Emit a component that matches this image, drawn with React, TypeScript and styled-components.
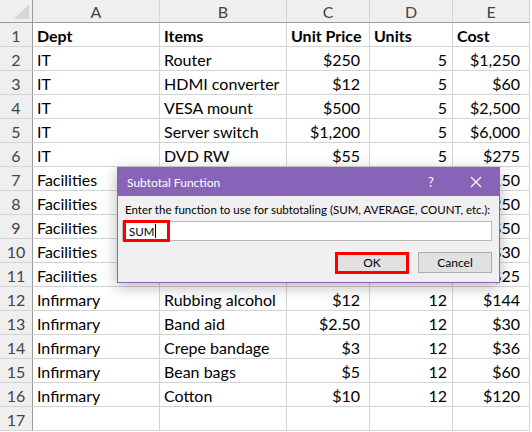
import React from 'react';
import styled, { createGlobalStyle } from 'styled-components';

const GlobalStyle = createGlobalStyle`
  html, body {
    margin: 0;
    padding: 0;
    background: #ffffff;
  }
  body {
    font-family: Lato, "Noto Sans", sans-serif;
  }
`;

const COLUMNS = ['A', 'B', 'C', 'D', 'E'];

type Align = 'left' | 'right';

interface CellDef {
  text: string;
  align: Align;
  pad?: number;
}

// rows 7-11 sit mostly under the dialog, only the ends show
const rows: string[][] = [
  ['Dept', 'Items', 'Unit Price', 'Units', 'Cost'],
  ['IT', 'Router', '$250', '5', '$1,250'],
  ['IT', 'HDMI converter', '$12', '5', '$60'],
  ['IT', 'VESA mount', '$500', '5', '$2,500'],
  ['IT', 'Server switch', '$1,200', '5', '$6,000'],
  ['IT', 'DVD RW', '$55', '5', '$275'],
  ['Facilities', '', '', '', '$150'],
  ['Facilities', '', '', '', '$250'],
  ['Facilities', '', '', '', '$50'],
  ['Facilities', '', '', '', '$30'],
  ['Facilities', '', '', '', '$25'],
  ['Infirmary', 'Rubbing alcohol', '$12', '12', '$144'],
  ['Infirmary', 'Band aid', '$2.50', '12', '$30'],
  ['Infirmary', 'Crepe bandage', '$3', '12', '$36'],
  ['Infirmary', 'Bean bags', '$5', '12', '$60'],
  ['Infirmary', 'Cotton', '$10', '12', '$120'],
  ['', '', '', '', ''],
];

function cellFor(rowIndex: number, colIndex: number, text: string): CellDef {
  if (rowIndex === 0 || colIndex < 2) return { text, align: 'left' };
  if (colIndex === 3) return { text, align: 'right', pad: 5 };
  return { text, align: 'right', pad: 9 };
}

const Page = styled.div`
  position: relative;
  width: 532px;
  height: 432px;
  overflow: hidden;
  background: #ffffff;
`;

const Sheet = styled.div`
  display: grid;
  grid-template-columns: 33px 127px 127px 83px 83px 77px;
  grid-template-rows: 23px repeat(17, 24px);
  width: 530px;
  color: #000000;
`;

const Corner = styled.div`
  position: relative;
  background: #efefef;
  border-right: 1px solid #9b9b9b;
  border-bottom: 1px solid #9b9b9b;
  box-sizing: border-box;
  overflow: hidden;

  &::after {
    content: '';
    position: absolute;
    right: 3px;
    bottom: 3px;
    width: 0;
    height: 0;
    border-left: 15px solid transparent;
    border-bottom: 15px solid #d6d6d6;
  }
`;

const ColHeader = styled.div`
  display: flex;
  align-items: center;
  justify-content: center;
  background: #efefef;
  border-right: 1px solid #d4d4d4;
  border-bottom: 1px solid #9b9b9b;
  box-sizing: border-box;
  font-size: 16px;
  color: #444444;
  padding-top: 1px;
`;

const RowHeader = styled.div`
  display: flex;
  align-items: center;
  justify-content: center;
  background: #efefef;
  border-right: 1px solid #9b9b9b;
  border-bottom: 1px solid #d4d4d4;
  box-sizing: border-box;
  font-size: 16px;
  color: #444444;
  padding-top: 2px;
`;

const Cell = styled.div<{ $align: Align; $pad: number; $bold: boolean }>`
  display: flex;
  align-items: center;
  justify-content: ${(p) => (p.$align === 'right' ? 'flex-end' : 'flex-start')};
  padding: 2px ${(p) => (p.$align === 'right' ? p.$pad : 0)}px 0
    ${(p) => (p.$align === 'left' ? 4 : 0)}px;
  border-right: 1px solid #d4d4d4;
  border-bottom: 1px solid #d4d4d4;
  box-sizing: border-box;
  font-size: 16px;
  font-weight: ${(p) => (p.$bold ? 700 : 400)};
  white-space: nowrap;
  overflow: hidden;
`;

const Dialog = styled.div`
  position: absolute;
  left: 117px;
  top: 167px;
  width: 383px;
  height: 116px;
  box-sizing: border-box;
  border: 1px solid #8764b8;
  background: #f0f0f0;
  box-shadow: 0 4px 14px rgba(0, 0, 0, 0.28);
  display: flex;
  flex-direction: column;
  font-family: Lato, "Noto Sans", sans-serif;
`;

const TitleBar = styled.div`
  height: 28px;
  flex: none;
  background: #8764b8;
  color: #ffffff;
  display: flex;
  align-items: center;
  padding-left: 9px;
  font-size: 12px;
`;

const Title = styled.span`
  flex: 1;
`;

const TitleButton = styled.span<{ $width: number }>`
  width: ${(p) => p.$width}px;
  display: flex;
  justify-content: center;
  align-items: center;
  font-size: 13px;
`;

const Body = styled.div`
  flex: 1;
  padding: 7px 7px 0 4px;
  display: flex;
  flex-direction: column;
`;

const Label = styled.div`
  font-size: 11.5px;
  color: #000000;
  padding-left: 3px;
  height: 14px;
  line-height: 14px;
  white-space: nowrap;
`;

const InputWrap = styled.div`
  position: relative;
  margin-top: 4px;
  height: 20px;
`;

const Input = styled.div`
  height: 100%;
  box-sizing: border-box;
  background: #ffffff;
  border: 1px solid #b9b9b9;
  display: flex;
  align-items: center;
  padding-left: 6px;
  font-size: 11.5px;
`;

const Caret = styled.span`
  display: inline-block;
  width: 1px;
  height: 14px;
  background: #000000;
  margin-left: 1px;
`;

const Highlight = styled.div<{ $w: number; $h: number; $l: number; $t: number }>`
  position: absolute;
  left: ${(p) => p.$l}px;
  top: ${(p) => p.$t}px;
  width: ${(p) => p.$w}px;
  height: ${(p) => p.$h}px;
  box-sizing: border-box;
  border: 3px solid #ff0000;
  pointer-events: none;
`;

const Buttons = styled.div`
  display: flex;
  justify-content: flex-end;
  gap: 9px;
  margin-top: 11px;
`;

const ButtonBox = styled.div`
  position: relative;
`;

const Button = styled.div<{ $primary?: boolean }>`
  width: 74px;
  height: 21px;
  box-sizing: border-box;
  background: #e1e1e1;
  border: 1px solid ${(p) => (p.$primary ? '#0078d7' : '#adadad')};
  display: flex;
  align-items: center;
  justify-content: center;
  font-size: 12px;
  color: #000000;
`;

function CloseIcon() {
  return (
    <svg width="12" height="12" viewBox="0 0 12 12">
      <path d="M1 1 L11 11 M11 1 L1 11" stroke="#ffffff" strokeWidth="1.3" fill="none" />
    </svg>
  );
}

export default function App() {
  return (
    <Page>
      <GlobalStyle />
      <Sheet>
        <Corner />
        {COLUMNS.map((c) => (
          <ColHeader key={c}>{c}</ColHeader>
        ))}
        {rows.map((row, r) => (
          <React.Fragment key={r}>
            <RowHeader>{r + 1}</RowHeader>
            {row.map((text, c) => {
              const def = cellFor(r, c, text);
              return (
                <Cell key={c} $align={def.align} $pad={def.pad ?? 0} $bold={r === 0}>
                  {def.text}
                </Cell>
              );
            })}
          </React.Fragment>
        ))}
      </Sheet>

      <Dialog>
        <TitleBar>
          <Title>Subtotal Function</Title>
          <TitleButton $width={44}>?</TitleButton>
          <TitleButton $width={46}>
            <CloseIcon />
          </TitleButton>
        </TitleBar>
        <Body>
          <Label>Enter the function to use for subtotaling (SUM, AVERAGE, COUNT, etc.):</Label>
          <InputWrap>
            <Input>
              SUM
              <Caret />
            </Input>
            <Highlight $l={1} $t={-1} $w={47} $h={22} />
          </InputWrap>
          <Buttons>
            <ButtonBox>
              <Button $primary>OK</Button>
              <Highlight $l={0} $t={0} $w={74} $h={22} />
            </ButtonBox>
            <ButtonBox>
              <Button>Cancel</Button>
            </ButtonBox>
          </Buttons>
        </Body>
      </Dialog>
    </Page>
  );
}
